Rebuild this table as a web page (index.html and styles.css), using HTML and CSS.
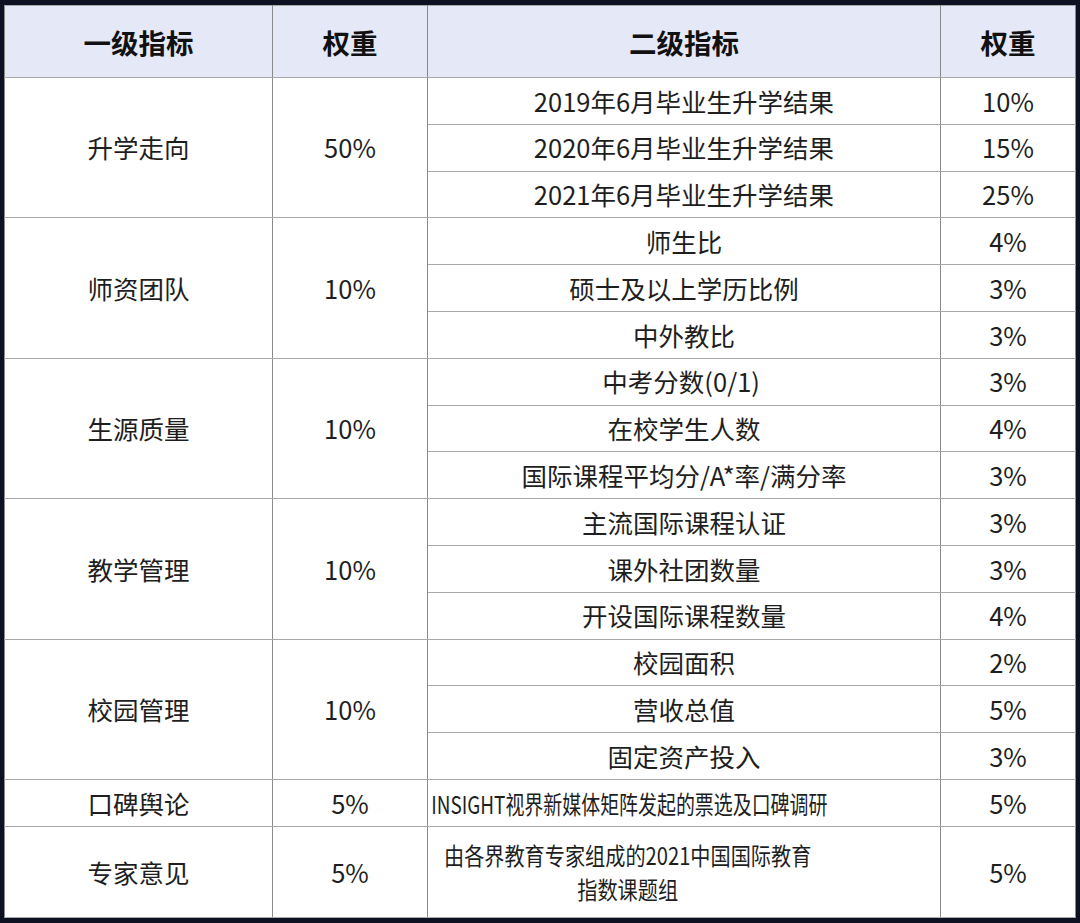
FILE: index.html
```html
<!DOCTYPE html>
<html lang="zh-CN">
<head>
<meta charset="utf-8">
<title>指标权重</title>
<link rel="stylesheet" href="styles.css">
</head>
<body>
<div class="frame">
<table class="grid">
<colgroup>
<col class="c1"><col class="c2"><col class="c3"><col class="c4">
</colgroup>
<thead>
<tr class="head"><th>一级指标</th><th>权重</th><th>二级指标</th><th>权重</th></tr>
</thead>
<tbody>
<tr class="r"><td rowspan="3">升学走向</td><td rowspan="3">50%</td><td>2019年6月毕业生升学结果</td><td>10%</td></tr>
<tr class="r"><td>2020年6月毕业生升学结果</td><td>15%</td></tr>
<tr class="r"><td>2021年6月毕业生升学结果</td><td>25%</td></tr>
<tr class="r"><td rowspan="3">师资团队</td><td rowspan="3">10%</td><td>师生比</td><td>4%</td></tr>
<tr class="r"><td>硕士及以上学历比例</td><td>3%</td></tr>
<tr class="r"><td>中外教比</td><td>3%</td></tr>
<tr class="r"><td rowspan="3">生源质量</td><td rowspan="3">10%</td><td>中考分数(0/1)&nbsp;</td><td>3%</td></tr>
<tr class="r"><td>在校学生人数</td><td>4%</td></tr>
<tr class="r"><td>国际课程平均分/A*率/满分率</td><td>3%</td></tr>
<tr class="r"><td rowspan="3">教学管理</td><td rowspan="3">10%</td><td>主流国际课程认证</td><td>3%</td></tr>
<tr class="r"><td>课外社团数量</td><td>3%</td></tr>
<tr class="r"><td>开设国际课程数量</td><td>4%</td></tr>
<tr class="r"><td rowspan="3">校园管理</td><td rowspan="3">10%</td><td>校园面积</td><td>2%</td></tr>
<tr class="r"><td>营收总值</td><td>5%</td></tr>
<tr class="r"><td>固定资产投入</td><td>3%</td></tr>
<tr class="r47"><td>口碑舆论</td><td>5%</td><td class="long"><span class="squeeze insight">INSIGHT视界新媒体矩阵发起的票选及口碑调研</span></td><td>5%</td></tr>
<tr class="r91"><td>专家意见</td><td>5%</td><td class="long"><span class="squeeze expert">由各界教育专家组成的2021中国国际教育<br>指数课题组</span></td><td>5%</td></tr>
</tbody>
</table>
</div>
</body>
</html>
```

FILE: styles.css
```css
html, body {
  margin: 0;
  padding: 0;
  background: #ffffff;
}

body {
  width: 1080px;
  height: 923px;
  overflow: hidden;
  font-family: "Noto Sans CJK SC", "Noto Sans", sans-serif;
  color: #1e1e1e;
}

.frame {
  box-sizing: border-box;
  width: 1080px;
  height: 923px;
  border-style: solid;
  border-color: #0d1122;
  border-width: 5px 5px 6px 4px;
  background: #ffffff;
}

.grid {
  width: 1071px;
  border-collapse: collapse;
  table-layout: fixed;
}

.c1 { width: 268px; }
.c2 { width: 155px; }
.c3 { width: 513px; }
.c4 { width: 135px; }

.grid th,
.grid td {
  padding: 0;
  text-align: center;
  vertical-align: middle;
  border-left: 1px solid #8a8a8a;
  border-right: 1px solid #8a8a8a;
  border-top: 1px solid #a9a9a9;
  border-bottom: 1px solid #a9a9a9;
  white-space: nowrap;
}

.grid th {
  font-size: 27.5px;
  font-weight: 700;
  color: #111111;
  background: #e5e9f7;
}

.grid td {
  font-size: 25.5px;
  font-weight: 400;
  line-height: 1.2;
}

.head { height: 72px; }
.r { height: 46.8px; }
.r47 { height: 47px; }
.r91 { height: 91px; }

.squeeze {
  display: inline-block;
  text-align: center;
}

.insight {
  font-size: 24.5px;
  transform: translateX(-55px) scaleX(0.773);
}

.expert {
  font-size: 24px;
  line-height: 34px;
  transform: translateX(-56px) scaleX(0.84);
}
```
